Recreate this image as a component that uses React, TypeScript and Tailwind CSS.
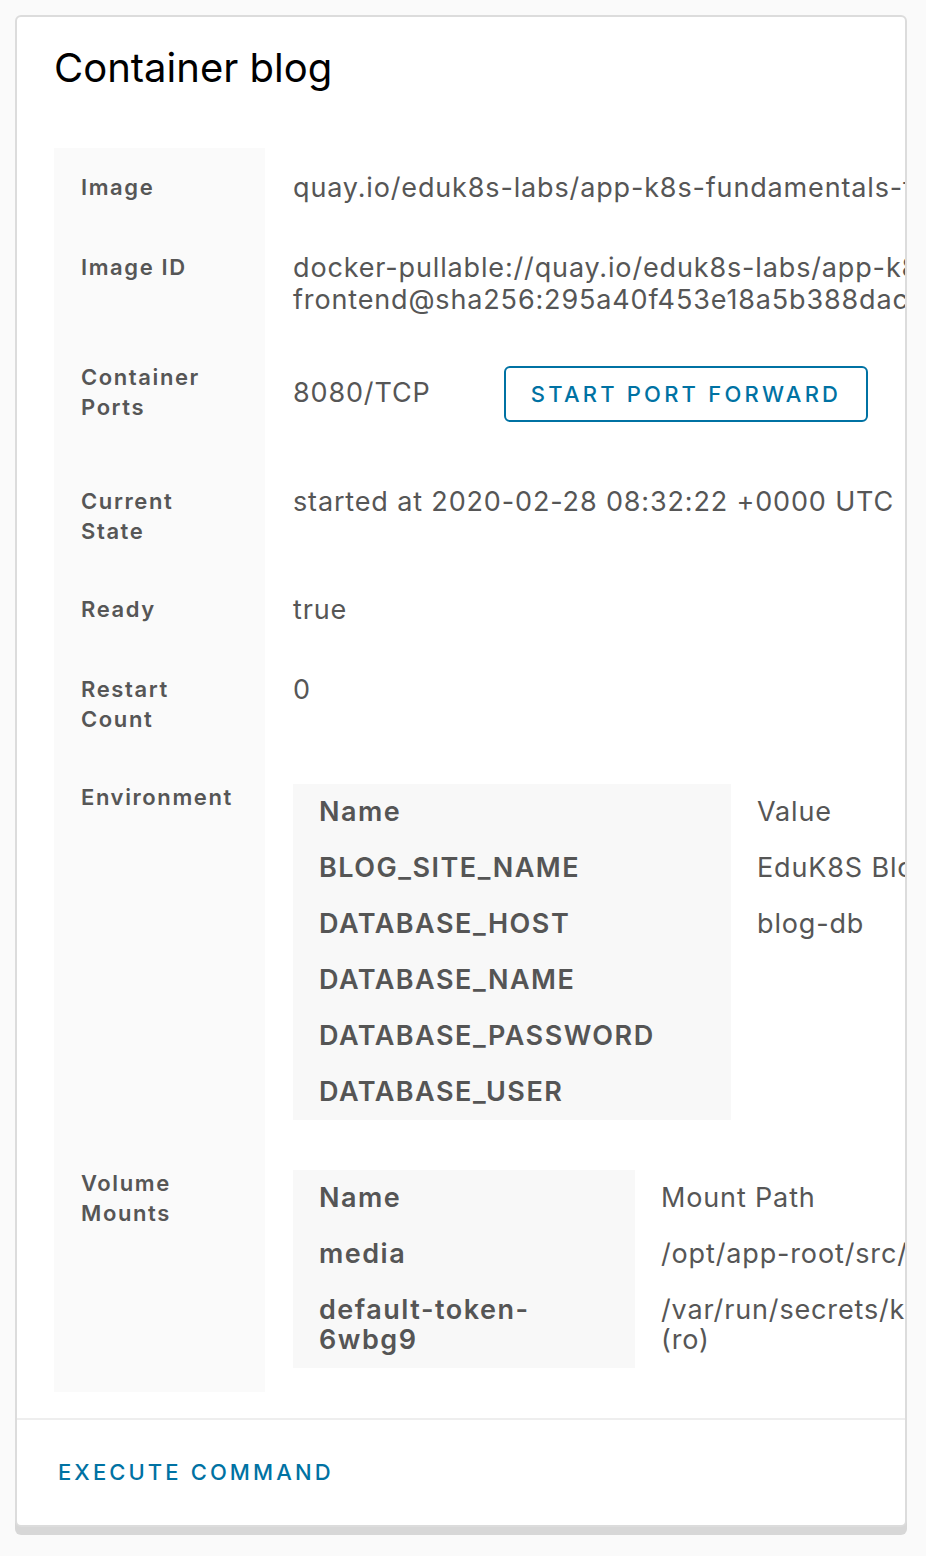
import React from "react";

const FONT = "font-['Inter','Noto_Sans',sans-serif]";

function Row({
  label,
  children,
  pb = "pb-[24px]",
}: {
  label: React.ReactNode;
  children: React.ReactNode;
  pb?: string;
}) {
  return (
    <div className="flex">
      <div
        className={`w-[211px] shrink-0 bg-[#fafafa] pl-[27px] pr-[12px] pt-[24px] ${pb} text-[22px] font-semibold leading-[30px] tracking-[1.6px] text-[#565656]`}
      >
        {label}
      </div>
      <div
        className={`flex-1 pl-[28px] pt-[24px] ${pb} text-[27px] leading-[32px] tracking-[0.85px] text-[#565656] whitespace-nowrap`}
      >
        {children}
      </div>
    </div>
  );
}

function NestedTable({
  head,
  rows,
  nameWidth,
}: {
  head: [string, string];
  rows: [React.ReactNode, React.ReactNode][];
  nameWidth: string;
}) {
  return (
    <div className="mt-[2px] flex text-[27px] leading-[30px]">
      <div className={`${nameWidth} shrink-0 bg-[#f8f8f8] font-semibold tracking-[1.5px] text-[#555]`}>
        <div className="px-[26px] py-[13px]">{head[0]}</div>
        {rows.map((r, i) => (
          <div key={i} className="px-[26px] py-[13px]">
            {r[0]}
          </div>
        ))}
      </div>
      <div className="pl-[26px] text-[#565656]">
        <div className="py-[13px]">{head[1]}</div>
        {rows.map((r, i) => (
          <div key={i} className="py-[13px]">
            {r[1]}
          </div>
        ))}
      </div>
    </div>
  );
}

export default function App() {
  return (
    <div className={`min-h-screen bg-[#fafafa] pl-[15px] pt-[15px] pb-[20px] ${FONT}`}>
      <div className="w-[892px] overflow-hidden rounded-[6px] border-2 border-[#dcdcdc] bg-white shadow-[0_8px_0_0_#d7d7d7]">
        {/* Header */}
        <div className="px-[37px] pt-[27px] pb-[56px]">
          <h1 className="text-[40px] font-normal leading-[48px] text-black">
            Container blog
          </h1>
        </div>

        {/* Details */}
        <div className="px-[37px] pb-[26px]">
          <Row label="Image">quay.io/eduk8s-labs/app-k8s-fundamentals-frontend</Row>
          <Row label="Image ID" pb="pb-[22px]">
            docker-pullable://quay.io/eduk8s-labs/app-k8s-fundamentals-
            <br />
            frontend@sha256:295a40f453e18a5b388dac7f1d2a0cbe44f2f5a1
          </Row>
          <Row
            label={
              <>
                Container
                <br />
                Ports
              </>
            }
          >
            <div className="flex items-start">
              <span className="mt-[15px] w-[211px]">8080/TCP</span>
              <button className="mt-[4px] mb-[16px] h-[56px] w-[364px] rounded-[6px] border-2 border-[#0072a3] text-[22px] font-medium tracking-[3.2px] text-[#0072a3]">
                START PORT FORWARD
              </button>
            </div>
          </Row>
          <Row
            label={
              <>
                Current
                <br />
                State
              </>
            }
          >
            started at 2020-02-28 08:32:22 +0000 UTC
          </Row>
          <Row label="Ready">true</Row>
          <Row
            label={
              <>
                Restart
                <br />
                Count
              </>
            }
          >
            0
          </Row>
          <Row label="Environment">
            <NestedTable
              nameWidth="w-[438px]"
              head={["Name", "Value"]}
              rows={[
                ["BLOG_SITE_NAME", "EduK8S Blog"],
                ["DATABASE_HOST", "blog-db"],
                ["DATABASE_NAME", "\u00a0"],
                ["DATABASE_PASSWORD", "\u00a0"],
                ["DATABASE_USER", "\u00a0"],
              ]}
            />
          </Row>
          <Row
            label={
              <>
                Volume
                <br />
                Mounts
              </>
            }
          >
            <NestedTable
              nameWidth="w-[342px]"
              head={["Name", "Mount Path"]}
              rows={[
                ["media", "/opt/app-root/src/media"],
                [
                  <>
                    default-token-
                    <br />
                    6wbg9
                  </>,
                  <>
                    /var/run/secrets/kubernetes.io/serviceaccount
                    <br />
                    (ro)
                  </>,
                ],
              ]}
            />
          </Row>
        </div>

        {/* Footer */}
        <div className="flex h-[107px] items-center border-t-2 border-[#eeeeee] px-[41px]">
          <button className="text-[22px] font-medium tracking-[3.1px] text-[#0072a3]">
            EXECUTE COMMAND
          </button>
        </div>
      </div>
    </div>
  );
}
